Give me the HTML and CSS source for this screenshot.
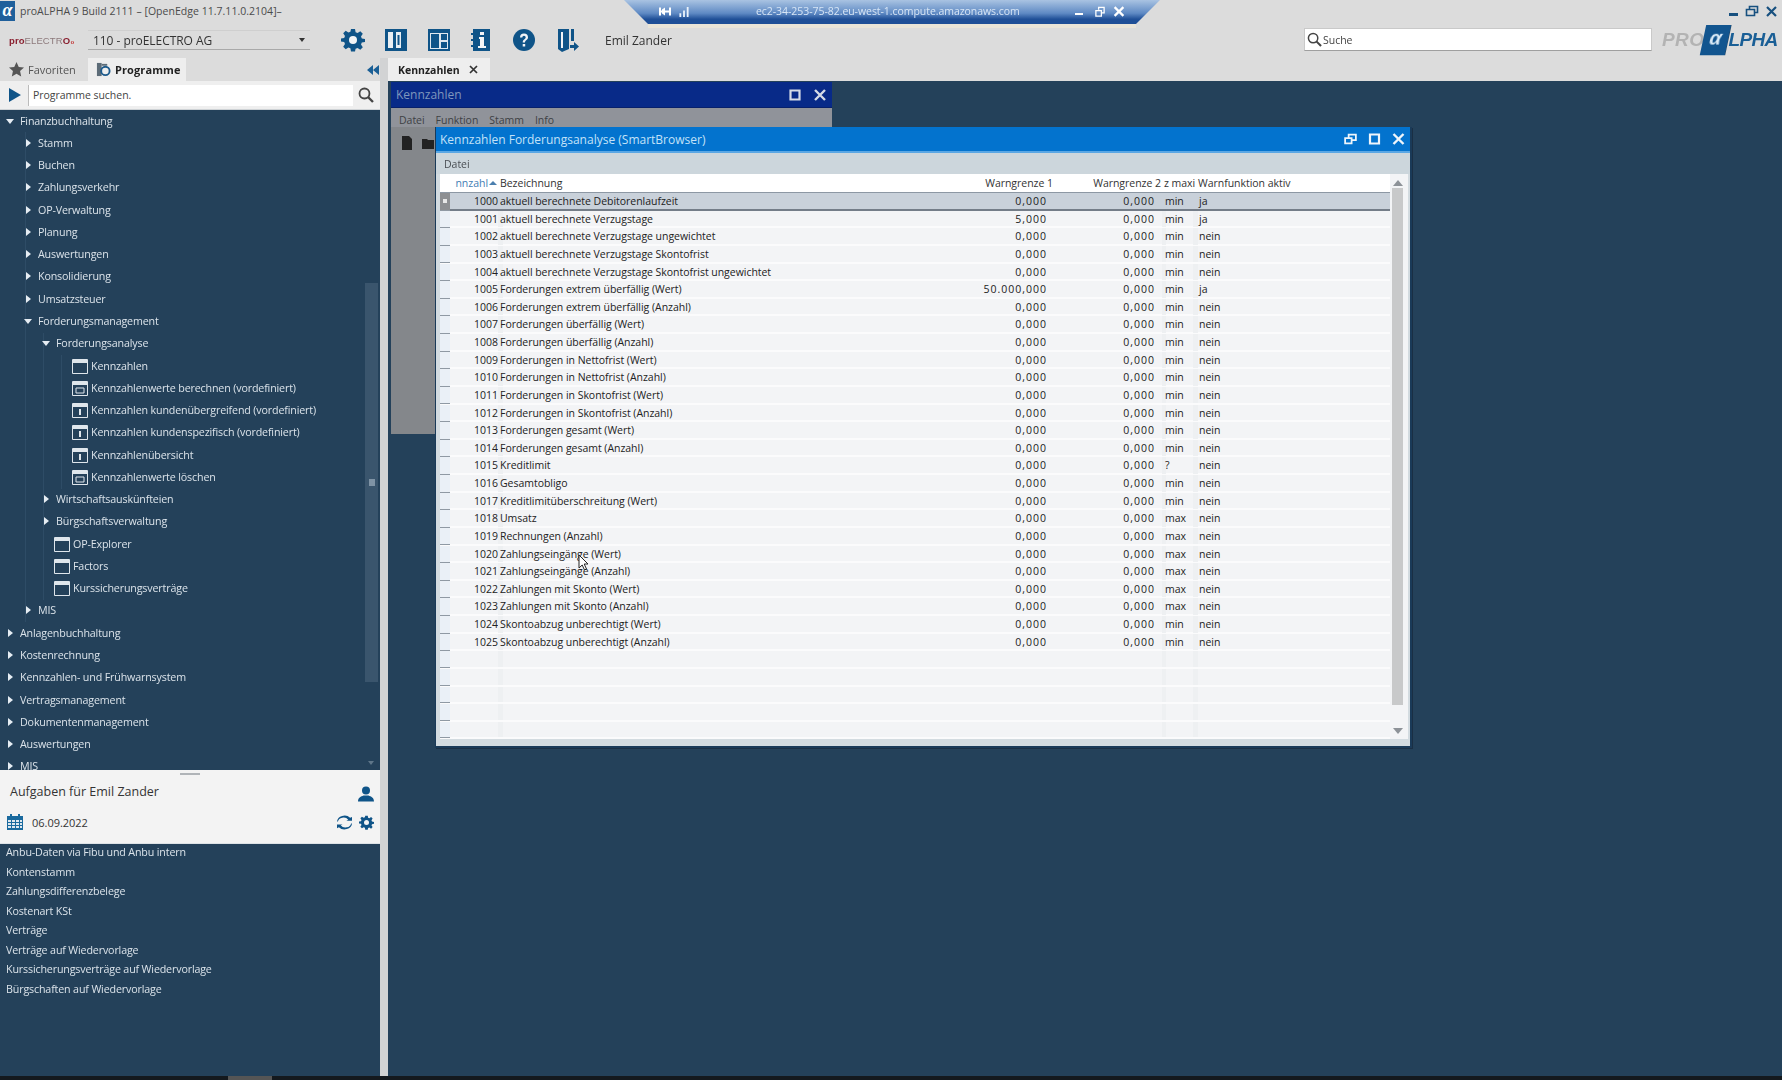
FILE: index.html
```html
<!DOCTYPE html>
<html lang="de">
<head>
<meta charset="utf-8">
<title>proALPHA</title>
<link rel="stylesheet" href="styles.css">
</head>
<body>
<svg class="defs" width="0" height="0">
  <symbol id="gear" viewBox="0 0 24 24">
    <path d="M10 1h4l.6 3.2 2 .8L19.300 3.200l2.500 2.500L20 8.400l.8 2L24 11v3l-3.200.6-.8 2 1.800 2.700-2.500 2.500-2.700-1.800-2 .8L14 23.500h-4l-.6-3.200-2-.8-2.700 1.800-2.500-2.500L4 16.100l-.8-2L0 13.500V10.500l3.200-.6.800-2L2.200 5.200l2.500-2.500 2.700 1.800 2-.8z" fill-rule="evenodd"/>
    <circle cx="12" cy="12" r="4" fill="#f2f4f6"/>
  </symbol>
  <symbol id="win" viewBox="0 0 16 16">
    <path d="M.5 1.500h15v14H.5z" fill="none" stroke="#dfe6ec"/>
    <path d="M1 2h14v3H1z" fill="#dfe6ec"/>
  </symbol>
  <symbol id="winc" viewBox="0 0 16 16">
    <path d="M.5 1.500h15v14H.5z" fill="none" stroke="#dfe6ec"/>
    <path d="M1 2h14v3H1z" fill="#dfe6ec"/>
    <path d="M4 8h8v5H4z" fill="none" stroke="#dfe6ec"/>
  </symbol>
  <symbol id="wini" viewBox="0 0 16 16">
    <path d="M.5 1.500h15v14H.5z" fill="none" stroke="#dfe6ec"/>
    <path d="M1 2h14v3H1z" fill="#dfe6ec"/>
    <path d="M7 7h2v6H7z" fill="#dfe6ec"/>
  </symbol>
</svg>

<div class="app">
  <header class="top">
    <div class="titlebar">
      <div class="alogo">α</div>
      <span class="apptitle">proALPHA 9 Build 2111 – [OpenEdge 11.7.11.0.2104]–</span>
      <div class="winbtns">
        <span class="wb-min"></span>
        <svg width="14" height="12" viewBox="0 0 14 12"><path d="M1.500 4.500h8v6h-8zM4.500 4V1.500h8v6H10" fill="none" stroke="#17507f" stroke-width="1.600"/></svg>
        <svg width="11" height="11" viewBox="0 0 11 11"><path d="M1 1l9 9M10 1l-9 9" stroke="#17507f" stroke-width="2.200"/></svg>
      </div>
    </div>
    <div class="toolbar">
      <div class="pelogo"><span class="pe-a">pro</span><span class="pe-b">ELECTR</span><span class="pe-a">O</span><span class="pe-c">₀</span></div>
      <div class="combo"><span>110 - proELECTRO AG</span><i class="combo-arrow"></i></div>
      <div class="tools">
        <svg class="tool" viewBox="0 0 24 24"><use href="#gear"/></svg>
        <svg class="tool" viewBox="0 0 24 24"><path d="M1 1h22v22H1z" fill="#0f5488"/><path d="M4 4h5v16H4zM12 4h5v16h-5z" fill="#e8eef3"/><path d="M13.500 7h2v10h-2z" fill="#0f5488"/></svg>
        <svg class="tool" viewBox="0 0 24 24"><path d="M1 1h22v22H1z" fill="#0f5488"/><path d="M3 5h18v16H3z" fill="#dfe7ee"/><path d="M4 6h8v14H4zM14 6h6v6h-6zM14 14h6v6h-6z" fill="#0f5488"/></svg>
        <svg class="tool" viewBox="0 0 24 24"><path d="M4 1h17v22H4z" fill="#0f5488"/><path d="M2 5h4v2H2zM2 11h4v2H2zM2 17h4v2H2z" fill="#0f5488"/><path d="M11 4h4v3h-4zM10 9h5v9h2v2H9v-2h2v-7h-1z" fill="#f2f4f6"/></svg>
        <svg class="tool" viewBox="0 0 24 24"><circle cx="12" cy="12" r="11" fill="#0f5488"/><path d="M8 9.500a4 4 0 0 1 8 0c0 2.500-3 2.700-3 5h-2.300c0-3.300 3-3.300 3-5a1.700 1.700 0 0 0-3.400 0z" fill="#f2f4f6"/><path d="M10.700 16h2.500v2.500h-2.500z" fill="#f2f4f6"/></svg>
        <svg class="tool" viewBox="0 0 24 24"><path d="M3 1h11v20l-7 3-4-3z" fill="#0f5488"/><path d="M7 4v16" stroke="#f2f4f6" stroke-width="2"/><path d="M16 1h3v12h-3zM15 17h4v-3l5 4.500-5 4.500v-3h-4z" fill="#0f5488"/></svg>
      </div>
      <span class="username">Emil Zander</span>
      <div class="globalsearch">
        <svg class="mag" viewBox="0 0 16 16"><circle cx="6.500" cy="6.500" r="5" fill="none" stroke="#444" stroke-width="1.600"/><path d="M10 10l5 5" stroke="#444" stroke-width="2.200"/></svg>
        <span>Suche</span>
      </div>
      <div class="palogo"><span class="pa-pro">PRO</span><span class="pa-a">α</span><span class="pa-lpha">LPHA</span></div>
    </div>
  </header>

  <div class="work">
    <aside class="side">
      <div class="sidetabs">
        <div class="stab">
          <svg class="stab-ic" viewBox="0 0 16 16"><path d="M8 0l2.400 5.200 5.600.6-4.200 3.800L13 15.500l-5-3-5 3 1.200-5.900L0 5.800l5.600-.6z" fill="#555"/></svg>
          <span>Favoriten</span>
        </div>
        <div class="stab stab-on">
          <svg class="stab-ic" viewBox="0 0 16 16"><path d="M1 1h5v14H1z" fill="#5d6c78"/><path d="M6 2h6v2H6z" fill="#5d6c78"/><circle cx="10" cy="9.500" r="4.500" fill="#eeeeee" stroke="#1c5a8c" stroke-width="2"/></svg>
          <span>Programme</span>
        </div>
        <svg class="collapse" viewBox="0 0 14 12"><path d="M7 1L1 6l6 5zM13 1L7 6l6 5z" fill="#1a5f96"/></svg>
      </div>
      <div class="psearch">
        <svg class="play" viewBox="0 0 12 14"><path d="M0 0l12 7-12 7z" fill="#0f5488"/></svg>
        <div class="pinput">Programme suchen.</div>
        <svg class="mag2" viewBox="0 0 16 16"><circle cx="6.500" cy="6.500" r="5" fill="none" stroke="#444" stroke-width="1.800"/><path d="M10 10l5 5" stroke="#444" stroke-width="2.400"/></svg>
      </div>
      <nav class="tree">
        <div class="sb"><i class="grip"></i></div>
        <i class="sbdown"></i>
        <div class="tr"><i class="tw tw-d"></i><span>Finanzbuchhaltung</span></div>
        <div class="grp">
          <div class="tr"><i class="tw tw-r"></i><span>Stamm</span></div>
          <div class="tr"><i class="tw tw-r"></i><span>Buchen</span></div>
          <div class="tr"><i class="tw tw-r"></i><span>Zahlungsverkehr</span></div>
          <div class="tr"><i class="tw tw-r"></i><span>OP-Verwaltung</span></div>
          <div class="tr"><i class="tw tw-r"></i><span>Planung</span></div>
          <div class="tr"><i class="tw tw-r"></i><span>Auswertungen</span></div>
          <div class="tr"><i class="tw tw-r"></i><span>Konsolidierung</span></div>
          <div class="tr"><i class="tw tw-r"></i><span>Umsatzsteuer</span></div>
          <div class="tr"><i class="tw tw-d"></i><span>Forderungsmanagement</span></div>
          <div class="grp">
            <div class="tr"><i class="tw tw-d"></i><span>Forderungsanalyse</span></div>
            <div class="grp">
              <div class="tr"><i class="lf"></i><svg class="wi"><use href="#win"/></svg><span>Kennzahlen</span></div>
              <div class="tr"><i class="lf"></i><svg class="wi"><use href="#winc"/></svg><span>Kennzahlenwerte berechnen (vordefiniert)</span></div>
              <div class="tr"><i class="lf"></i><svg class="wi"><use href="#wini"/></svg><span>Kennzahlen kundenübergreifend (vordefiniert)</span></div>
              <div class="tr"><i class="lf"></i><svg class="wi"><use href="#wini"/></svg><span>Kennzahlen kundenspezifisch (vordefiniert)</span></div>
              <div class="tr"><i class="lf"></i><svg class="wi"><use href="#wini"/></svg><span>Kennzahlenübersicht</span></div>
              <div class="tr"><i class="lf"></i><svg class="wi"><use href="#winc"/></svg><span>Kennzahlenwerte löschen</span></div>
            </div>
            <div class="tr"><i class="tw tw-r"></i><span>Wirtschaftsauskünfteien</span></div>
            <div class="tr"><i class="tw tw-r"></i><span>Bürgschaftsverwaltung</span></div>
            <div class="tr"><i class="lf"></i><svg class="wi"><use href="#win"/></svg><span>OP-Explorer</span></div>
            <div class="tr"><i class="lf"></i><svg class="wi"><use href="#win"/></svg><span>Factors</span></div>
            <div class="tr"><i class="lf"></i><svg class="wi"><use href="#win"/></svg><span>Kurssicherungsverträge</span></div>
          </div>
          <div class="tr"><i class="tw tw-r"></i><span>MIS</span></div>
        </div>
        <div class="tr"><i class="tw tw-r"></i><span>Anlagenbuchhaltung</span></div>
        <div class="tr"><i class="tw tw-r"></i><span>Kostenrechnung</span></div>
        <div class="tr"><i class="tw tw-r"></i><span>Kennzahlen- und Frühwarnsystem</span></div>
        <div class="tr"><i class="tw tw-r"></i><span>Vertragsmanagement</span></div>
        <div class="tr"><i class="tw tw-r"></i><span>Dokumentenmanagement</span></div>
        <div class="tr"><i class="tw tw-r"></i><span>Auswertungen</span></div>
        <div class="tr"><i class="tw tw-r"></i><span>MIS</span></div>
      </nav>
      <section class="tasks">
        <i class="handle"></i>
        <div class="tasks-head">
          <span>Aufgaben für Emil Zander</span>
          <svg class="t-ic" viewBox="0 0 16 16"><circle cx="8" cy="4.500" r="4" fill="#0f5488"/><path d="M0 15.500c0-4 3-5 5.500-6h5c2.500 1 5.500 2 5.500 6z" fill="#0f5488"/></svg>
        </div>
        <div class="tasks-date">
          <svg class="t-cal" viewBox="0 0 16 16"><path d="M0 2h16v14H0z" fill="#1a6a9e"/><path d="M3 0h2v3H3zM11 0h2v3h-2z" fill="#1a6a9e"/><path d="M1 6h3v2H1zM5 6h3v2H5zM9 6h3v2H9zM13 6h2v2h-2zM1 9h3v2H1zM5 9h3v2H5zM9 9h3v2H9zM13 9h2v2h-2zM1 12h3v2H1zM5 12h3v2H5zM9 12h3v2H9zM13 12h2v2h-2z" fill="#dfe8ef"/></svg>
          <span>06.09.2022</span>
          <svg class="t-ref" viewBox="0 0 16 16"><path d="M1 7a6 5 0 0 1 11-2l-2 1h6v-4l-2 1A8 7 0 0 0 0 7zM15 9a6 5 0 0 1-11 2l2-1H0v4l2-1a8 7 0 0 0 14-4z" fill="#0f5488"/></svg>
          <svg class="t-gear" viewBox="0 0 24 24"><use href="#gear"/></svg>
        </div>
      </section>
      <ul class="tasklist">
        <li>Anbu-Daten via Fibu und Anbu intern</li>
        <li>Kontenstamm</li>
        <li>Zahlungsdifferenzbelege</li>
        <li>Kostenart KSt</li>
        <li>Verträge</li>
        <li>Verträge auf Wiedervorlage</li>
        <li>Kurssicherungsverträge auf Wiedervorlage</li>
        <li>Bürgschaften auf Wiedervorlage</li>
      </ul>
    </aside>

    <main class="main">
      <div class="doctabs">
        <div class="dtab"><span>Kennzahlen</span><svg class="dx" viewBox="0 0 9 9"><path d="M1 1l7 7M8 1L1 8" stroke="#333" stroke-width="1.700"/></svg></div>
      </div>
      <div class="desk">
        <div class="bwin">
          <div class="bwin-title">
            <span>Kennzahlen</span>
            <svg class="wctl" viewBox="0 0 12 12"><path d="M1.500 1.500h9v9h-9z" fill="none" stroke="#d5dbe6" stroke-width="2.200"/></svg>
            <svg class="wctl" viewBox="0 0 12 12"><path d="M1 1l10 10M11 1L1 11" stroke="#d5dbe6" stroke-width="2.400"/></svg>
          </div>
          <div class="bwin-menu"><span>Datei</span><span>Funktion</span><span>Stamm</span><span>Info</span></div>
          <div class="bwin-tools">
            <svg class="bt" viewBox="0 0 14 14"><path d="M2 0h7l3 3v11H2z" fill="#222"/></svg>
            <svg class="bt" viewBox="0 0 14 14"><path d="M0 3h5l1 1h6v9H0z" fill="#222"/></svg>
          </div>
        </div>

        <div class="fwin">
          <div class="fwin-title">
            <span>Kennzahlen Forderungsanalyse (SmartBrowser)</span>
            <svg class="wctl" viewBox="0 0 14 12"><path d="M1.200 5h7v5.800h-7zM5 4.500V1.200h7.800v6H9" fill="none" stroke="#eef5fb" stroke-width="1.900"/></svg>
            <svg class="wctl" viewBox="0 0 12 12"><path d="M1.500 1.500h9v9h-9z" fill="none" stroke="#eef5fb" stroke-width="2.200"/></svg>
            <svg class="wctl" viewBox="0 0 12 12"><path d="M1 1l10 10M11 1L1 11" stroke="#eef5fb" stroke-width="2.400"/></svg>
          </div>
          <div class="fwin-menu">Datei</div>
          <div class="gridwrap">
            <div class="grid">
              <div class="ghead">
                <span class="gh-sel"></span>
                <span class="gh-num"><span class="gh-clip">nnzahl</span><i class="sortup"></i></span>
                <span class="gh-name">Bezeichnung</span>
                <span class="gh-w1">Warngrenze 1</span>
                <span class="gh-w2">Warngrenze 2</span>
                <span class="gh-z">z maxi</span>
                <span class="gh-f">Warnfunktion aktiv</span>
              </div>
              <div class="row row-on"><i class="sel"></i><span class="n">1000</span><span class="t">aktuell berechnete Debitorenlaufzeit</span><span class="w">0,000</span><span class="w">0,000</span><span class="u">min</span><span class="f">ja</span></div>
              <div class="row"><i class="sel"></i><span class="n">1001</span><span class="t">aktuell berechnete Verzugstage</span><span class="w">5,000</span><span class="w">0,000</span><span class="u">min</span><span class="f">ja</span></div>
              <div class="row"><i class="sel"></i><span class="n">1002</span><span class="t">aktuell berechnete Verzugstage ungewichtet</span><span class="w">0,000</span><span class="w">0,000</span><span class="u">min</span><span class="f">nein</span></div>
              <div class="row"><i class="sel"></i><span class="n">1003</span><span class="t">aktuell berechnete Verzugstage Skontofrist</span><span class="w">0,000</span><span class="w">0,000</span><span class="u">min</span><span class="f">nein</span></div>
              <div class="row"><i class="sel"></i><span class="n">1004</span><span class="t">aktuell berechnete Verzugstage Skontofrist ungewichtet</span><span class="w">0,000</span><span class="w">0,000</span><span class="u">min</span><span class="f">nein</span></div>
              <div class="row"><i class="sel"></i><span class="n">1005</span><span class="t">Forderungen extrem überfällig (Wert)</span><span class="w">50.000,000</span><span class="w">0,000</span><span class="u">min</span><span class="f">ja</span></div>
              <div class="row"><i class="sel"></i><span class="n">1006</span><span class="t">Forderungen extrem überfällig (Anzahl)</span><span class="w">0,000</span><span class="w">0,000</span><span class="u">min</span><span class="f">nein</span></div>
              <div class="row"><i class="sel"></i><span class="n">1007</span><span class="t">Forderungen überfällig (Wert)</span><span class="w">0,000</span><span class="w">0,000</span><span class="u">min</span><span class="f">nein</span></div>
              <div class="row"><i class="sel"></i><span class="n">1008</span><span class="t">Forderungen überfällig (Anzahl)</span><span class="w">0,000</span><span class="w">0,000</span><span class="u">min</span><span class="f">nein</span></div>
              <div class="row"><i class="sel"></i><span class="n">1009</span><span class="t">Forderungen in Nettofrist (Wert)</span><span class="w">0,000</span><span class="w">0,000</span><span class="u">min</span><span class="f">nein</span></div>
              <div class="row"><i class="sel"></i><span class="n">1010</span><span class="t">Forderungen in Nettofrist (Anzahl)</span><span class="w">0,000</span><span class="w">0,000</span><span class="u">min</span><span class="f">nein</span></div>
              <div class="row"><i class="sel"></i><span class="n">1011</span><span class="t">Forderungen in Skontofrist (Wert)</span><span class="w">0,000</span><span class="w">0,000</span><span class="u">min</span><span class="f">nein</span></div>
              <div class="row"><i class="sel"></i><span class="n">1012</span><span class="t">Forderungen in Skontofrist (Anzahl)</span><span class="w">0,000</span><span class="w">0,000</span><span class="u">min</span><span class="f">nein</span></div>
              <div class="row"><i class="sel"></i><span class="n">1013</span><span class="t">Forderungen gesamt (Wert)</span><span class="w">0,000</span><span class="w">0,000</span><span class="u">min</span><span class="f">nein</span></div>
              <div class="row"><i class="sel"></i><span class="n">1014</span><span class="t">Forderungen gesamt (Anzahl)</span><span class="w">0,000</span><span class="w">0,000</span><span class="u">min</span><span class="f">nein</span></div>
              <div class="row"><i class="sel"></i><span class="n">1015</span><span class="t">Kreditlimit</span><span class="w">0,000</span><span class="w">0,000</span><span class="u">?</span><span class="f">nein</span></div>
              <div class="row"><i class="sel"></i><span class="n">1016</span><span class="t">Gesamtobligo</span><span class="w">0,000</span><span class="w">0,000</span><span class="u">min</span><span class="f">nein</span></div>
              <div class="row"><i class="sel"></i><span class="n">1017</span><span class="t">Kreditlimitüberschreitung (Wert)</span><span class="w">0,000</span><span class="w">0,000</span><span class="u">min</span><span class="f">nein</span></div>
              <div class="row"><i class="sel"></i><span class="n">1018</span><span class="t">Umsatz</span><span class="w">0,000</span><span class="w">0,000</span><span class="u">max</span><span class="f">nein</span></div>
              <div class="row"><i class="sel"></i><span class="n">1019</span><span class="t">Rechnungen (Anzahl)</span><span class="w">0,000</span><span class="w">0,000</span><span class="u">max</span><span class="f">nein</span></div>
              <div class="row"><i class="sel"></i><span class="n">1020</span><span class="t">Zahlungseingänge (Wert)</span><span class="w">0,000</span><span class="w">0,000</span><span class="u">max</span><span class="f">nein</span></div>
              <div class="row"><i class="sel"></i><span class="n">1021</span><span class="t">Zahlungseingänge (Anzahl)</span><span class="w">0,000</span><span class="w">0,000</span><span class="u">max</span><span class="f">nein</span></div>
              <div class="row"><i class="sel"></i><span class="n">1022</span><span class="t">Zahlungen mit Skonto (Wert)</span><span class="w">0,000</span><span class="w">0,000</span><span class="u">max</span><span class="f">nein</span></div>
              <div class="row"><i class="sel"></i><span class="n">1023</span><span class="t">Zahlungen mit Skonto (Anzahl)</span><span class="w">0,000</span><span class="w">0,000</span><span class="u">max</span><span class="f">nein</span></div>
              <div class="row"><i class="sel"></i><span class="n">1024</span><span class="t">Skontoabzug unberechtigt (Wert)</span><span class="w">0,000</span><span class="w">0,000</span><span class="u">min</span><span class="f">nein</span></div>
              <div class="row"><i class="sel"></i><span class="n">1025</span><span class="t">Skontoabzug unberechtigt (Anzahl)</span><span class="w">0,000</span><span class="w">0,000</span><span class="u">min</span><span class="f">nein</span></div>
              <div class="row"><i class="sel"></i><span class="n"></span><span class="t"></span><span class="w"></span><span class="w"></span><span class="u"></span><span class="f"></span></div>
              <div class="row"><i class="sel"></i><span class="n"></span><span class="t"></span><span class="w"></span><span class="w"></span><span class="u"></span><span class="f"></span></div>
              <div class="row"><i class="sel"></i><span class="n"></span><span class="t"></span><span class="w"></span><span class="w"></span><span class="u"></span><span class="f"></span></div>
              <div class="row"><i class="sel"></i><span class="n"></span><span class="t"></span><span class="w"></span><span class="w"></span><span class="u"></span><span class="f"></span></div>
              <div class="row"><i class="sel"></i><span class="n"></span><span class="t"></span><span class="w"></span><span class="w"></span><span class="u"></span><span class="f"></span></div>
            </div>
            <div class="vscroll">
              <svg class="sarrow" viewBox="0 0 10 6"><path d="M5 0l5 6H0z" fill="#8d9298"/></svg>
              <div class="vthumb"></div>
              <svg class="sarrow sarrow-end" viewBox="0 0 10 6"><path d="M5 6L0 0h10z" fill="#8d9298"/></svg>
            </div>
          </div>
        </div>

        <svg class="cursor" viewBox="0 0 12 18"><path d="M1 1v13l3.200-3 2.300 5 2-1-2.300-5H10z" fill="#fff" stroke="#222"/></svg>
      </div>
    </main>
  </div>
  <div class="footstrip"><i class="footthumb"></i></div>

  <div class="conn">
    <svg class="conn-shape" viewBox="0 0 536 30" preserveAspectRatio="none"><defs><linearGradient id="cg" x1="0" y1="0" x2="0" y2="1"><stop offset="0" stop-color="#a9c3e2"/><stop offset=".55" stop-color="#5f8ac4"/><stop offset=".8" stop-color="#1f4f97"/><stop offset="1" stop-color="#1f4f97"/></linearGradient></defs><path d="M0 0h536l-24 24H24z" fill="url(#cg)"/><path d="M24 24h488v4H24z" fill="#e9e4d8"/></svg>
    <div class="conn-row">
      <svg class="c-ic" viewBox="0 0 12 10"><path d="M0 1h2v8H0zM10 1h2v8h-2zM2 4h8v2H2zM3 3l3-2v8L3 7z" fill="#fff"/></svg>
      <svg class="c-ic" viewBox="0 0 12 12"><path d="M1 8h2v4H1zM5 5h2v7H5zM9 1h2v11H9z" fill="#eaf2fb"/></svg>
      <span class="c-host">ec2-34-253-75-82.eu-west-1.compute.amazonaws.com</span>
      <span class="c-min"></span>
      <svg class="c-ic" viewBox="0 0 12 12"><path d="M1.500 5h6v6h-6zM4.500 4V1.500h6v6H8" fill="none" stroke="#fff" stroke-width="1.400"/></svg>
      <svg class="c-ic" viewBox="0 0 10 10"><path d="M1 1l8 8M9 1L1 9" stroke="#fff" stroke-width="2"/></svg>
    </div>
  </div>
</div>
</body>
</html>
```

FILE: styles.css
```css
* { box-sizing: border-box; }
html, body { margin: 0; height: 100%; overflow: hidden; }
body { font-family: "Open Sans", "Noto Sans", sans-serif; font-size: 10.500px; color: #222; background: #24415a; letter-spacing: -.03px; }
.defs { position: absolute; }

.app { position: relative; display: flex; flex-direction: column; height: 1080px; width: 1782px; filter: blur(.3px); }

.top { background: #dcdcdc; height: 58px; flex: none; }
.titlebar { height: 22px; display: flex; align-items: center; }
.alogo { width: 15px; height: 20px; background: #1f5f9b; color: #fff; font: italic 700 18px/18px "Liberation Serif", serif; text-align: center; }
.apptitle { margin-left: 5px; color: #4b4b4b; font-size: 10.500px; letter-spacing: .03px; }
.winbtns { margin-left: auto; display: flex; align-items: center; gap: 7px; padding-right: 5px; }
.wb-min { width: 9px; height: 3px; background: #17507f; margin-top: 7px; }

.toolbar { height: 36px; display: flex; align-items: center; position: relative; }
.pelogo { width: 88px; padding-left: 9px; font: 700 9.500px "Liberation Sans", sans-serif; letter-spacing: .1px; }
.pe-a { color: #8a2030; }
.pe-b { color: #8d7a7c; font-weight: 400; }
.pe-c { color: #c23a3a; }
.combo { width: 222px; height: 20px; background: #dcdcdc; border-bottom: 1px solid #a9a9a9; border-top: 1px solid #cfcfcf; display: flex; align-items: center; padding: 0 5px; font-size: 12px; color: #333; letter-spacing: -.05px; }
.combo-arrow { margin-left: auto; border: 3.500px solid transparent; border-top: 4px solid #333; border-bottom: 0; }
.tools { display: flex; margin-left: 31px; gap: 18.800px; }
.tool { width: 24px; height: 24px; fill: #0f5488; }
.username { margin-left: 26px; font-size: 12px; color: #333; letter-spacing: 0; }
.globalsearch { position: absolute; left: 1304px; top: 6px; width: 348px; height: 23px; background: #fff; border: 1px solid #c9c9c9; border-bottom-color: #9f9f9f; display: flex; align-items: center; gap: 1px; padding-left: 2px; color: #444; }
.mag { width: 15px; height: 15px; }
.palogo { position: absolute; left: 1662px; top: 3px; width: 118px; height: 30px; display: flex; align-items: center; font: italic 700 19px "Liberation Sans", sans-serif; }
.pa-pro { color: #b3b3b3; letter-spacing: .4px; flex: none; }
.pa-a { background: #12558f; color: #dcecf8; width: 25px; height: 30px; flex: none; text-align: center; line-height: 27px; transform: skewX(-12deg); margin-left: -1px; }
.pa-lpha { color: #1a5f96; letter-spacing: -.6px; flex: none; }

.work { flex: 1; display: flex; min-height: 0; }

.side { width: 388px; flex: none; display: flex; flex-direction: column; background: #d2d3d4; border-right: 8px solid #d2d3d4; }
.sidetabs { height: 23px; display: flex; align-items: flex-end; background: #dcdcdc; position: relative; flex: none; padding-left: 9px; }
.stab { height: 23px; display: flex; align-items: center; gap: 4px; color: #555; width: 70px; font-size: 11px; flex: none; }
.stab-on { background: #eeeeee; width: 98px; padding-left: 8px; margin-left: 9px; color: #222; font-weight: 700; letter-spacing: .1px; }
.stab-ic { width: 15px; height: 15px; flex: none; }
.collapse { position: absolute; right: 0; top: 6px; width: 14px; height: 12px; }
.psearch { height: 29px; flex: none; background: #efefef; display: flex; align-items: center; padding: 0 6px 0 9px; border-bottom: 1px solid #cfd3d6; }
.play { width: 12px; height: 14px; }
.pinput { width: 326px; height: 21px; margin-left: 7px; background: #fff; border-left: 1px solid #bbb; padding-left: 4px; line-height: 20px; color: #444; }
.mag2 { width: 16px; height: 16px; margin-left: 5px; }

.tree { height: 660px; flex: none; background: #24415a; color: #dbe3ea; overflow: hidden; position: relative; font-size: 10.700px; letter-spacing: -.15px; }
.sb { position: absolute; left: 365px; top: 173px; width: 13px; height: 399px; background: #3a556d; display: flex; align-items: center; justify-content: center; }
.grip { width: 6px; height: 7px; background: #7f93a5; }
.sbdown { position: absolute; left: 368px; top: 651px; border: 3.500px solid transparent; border-top: 4px solid #5f7689; border-bottom: 0; }
.tr { height: 22.280px; display: flex; align-items: center; padding: 0 0 1px 6px; white-space: nowrap; }
.grp { margin-left: 18px; background: linear-gradient(#2e4c66, #2e4c66) 7px 0 / 1px 100% no-repeat; }
.tw { width: 14px; height: 10px; flex: none; position: relative; }
.tw::before { content: ""; position: absolute; }
.tw-r::before { left: 2px; top: 1px; border: 4px solid transparent; border-left: 5px solid #e6edf3; border-right: 0; }
.tw-d::before { left: 0; top: 3px; border: 4.500px solid transparent; border-top: 5px solid #e6edf3; border-bottom: 0; }
.lf { width: 12px; flex: none; }
.wi { width: 16px; height: 16px; flex: none; margin-right: 3px; }

.tasks { height: 74px; flex: none; background: #f3f3f3; position: relative; padding: 8px 6px 0 10px; border-bottom: 1px solid #dde2e6; }
.handle { position: absolute; left: 180px; top: 3px; width: 20px; height: 2px; background: #b0b4b8; }
.tasks-head { height: 26px; display: flex; align-items: center; justify-content: space-between; font-size: 12.500px; color: #333; letter-spacing: 0; }
.t-ic { width: 16px; height: 16px; margin-top: 6px; }
.tasks-date { height: 32px; margin-left: -3px; display: flex; align-items: center; font-size: 11px; color: #333; margin-top: 2px; }
.t-cal { width: 16px; height: 16px; margin-right: 9px; flex: none; }
.t-ref { width: 15px; height: 15px; margin-left: auto; margin-right: 7px; }
.t-gear { width: 15px; height: 15px; fill: #0f5488; }
.tasklist { flex: 1; margin: 0; padding: 0 0 0 6px; list-style: none; background: #24415a; color: #dbe3ea; font-size: 10.700px; letter-spacing: -.15px; }
.tasklist li { height: 19.500px; line-height: 16px; white-space: nowrap; }

.main { flex: 1; display: flex; flex-direction: column; min-width: 0; }
.doctabs { height: 23px; flex: none; background: #dcdcdc; }
.dtab { width: 102px; height: 23px; background: #eeeeee; display: flex; align-items: center; padding-left: 10px; font-weight: 700; font-size: 10.500px; color: #222; letter-spacing: 0; }
.dx { width: 9px; height: 9px; margin-left: 9px; }
.desk { flex: 1; position: relative; background: #24415a; }

.bwin { position: absolute; left: 3px; top: 1px; width: 441px; height: 352px; background: #84878b; }
.bwin-title { height: 26px; background: #082a88; color: #7f97bd; display: flex; align-items: center; padding: 0 6px 0 5px; gap: 11px; font-size: 12px; letter-spacing: 0; border-bottom: 1px solid #07206b; }
.bwin-title span { margin-right: auto; }
.bwin-title .wctl:first-of-type { margin-right: 2px; }
.bwin-menu { height: 19px; display: flex; gap: 11px; padding: 5px 0 0 8px; color: #3e4145; background: #90939a; }
.bwin-tools { display: flex; gap: 8px; padding: 9px 0 0 9px; }
.bt { width: 14px; height: 14px; }
.wctl { width: 12px; height: 12px; flex: none; }

.fwin { position: absolute; left: 47px; top: 46px; width: 977px; height: 621px; background: #d3dbe0; border: 1px solid #1a3a58; border-width: 0 2px 2px 1px; box-shadow: 1px 1px 0 #1a2f44; }
.fwin-title { height: 26px; background: #0373ce; color: #c3e2f8; display: flex; align-items: center; padding: 0 5px 0 4px; gap: 11px; font-size: 12px; letter-spacing: 0; border-bottom: 2px solid #5aa7e4; }
.fwin-title span { margin-right: auto; }
.fwin-title .wctl { width: 13px; height: 12px; }
.fwin-menu { height: 21px; line-height: 23px; padding-left: 8px; color: #4a4f54; background: #ccd6dc; }
.gridwrap { display: flex; margin: 0 2px 0 4px; }
.grid { width: 950px; flex: none; background: #f3f4f6; overflow: hidden; }
.ghead, .row { display: grid; }
.ghead { grid-template-columns: 12px 46px 452px 103px 108px 36px 193px; height: 19px; line-height: 18px; background: #fff; color: #333; border-bottom: 1px solid #8d98a4; white-space: nowrap; }
.gh-num { display: flex; justify-content: flex-end; align-items: center; color: #3f7db4; }
.gh-clip { flex: none; }
.sortup { flex: none; margin: 0 1px 0 1px; border: 4px solid transparent; border-bottom: 4px solid #4a7fae; border-top: 0; }
.gh-name { padding-left: 2px; }
.gh-w1, .gh-w2 { text-align: right; }
.gh-z { padding-left: 3px; }
.gh-f { padding-left: 1px; }
.row { grid-template-columns: 12px 46px 452px 97px 108px 43px 192px; height: 17.640px; line-height: 16.500px; background: #f3f4f6; border-bottom: 2px solid #fbfbfc; white-space: nowrap; }
.row-on { background: #c9d1da; border-bottom: 2px solid #747d88; }
.sel { background: #eaf0f7; border-bottom: 1px solid #8f99a4; margin: 0 2px -1px 0; position: relative; }
.row-on .sel { background: #8d8f92; }
.row-on .sel::before { content: ""; position: absolute; left: 3px; top: 6px; width: 4px; height: 4px; background: #e8e8e8; }
.n { text-align: right; }
.t { padding-left: 2px; background: linear-gradient(#eef0f2, #eef0f2) 0 0 / 5px 100% no-repeat; }
.row-on .t, .row-on .u { background: none; }
.w { text-align: right; letter-spacing: 1px; }
.u { padding-left: 10px; letter-spacing: 0; background: linear-gradient(#eef0f2, #eef0f2) 7px 0 / 4px 100% no-repeat, linear-gradient(#eef0f2, #eef0f2) right 0 / 5px 100% no-repeat; }
.f { padding-left: 1px; letter-spacing: 0; }
.vscroll { flex: 1; height: 565px; background: #f3f4f6; display: flex; flex-direction: column; padding: 6px 0 5px 2px; }
.sarrow { width: 10px; height: 6px; flex: none; margin-left: 1px; }
.sarrow-end { margin-top: auto; }
.vthumb { width: 11px; height: 517px; margin-top: 2px; background: #c8c9ca; }
.cursor { position: absolute; left: 190px; top: 473px; width: 12px; height: 18px; }

.footstrip { height: 4px; flex: none; background: #14191e; position: relative; }
.footthumb { position: absolute; left: 228px; top: 0; width: 44px; height: 4px; background: #555; }

.conn { position: absolute; left: 624px; top: 0; width: 536px; height: 30px; }
.conn-shape { position: absolute; inset: 0; width: 100%; height: 100%; }
.conn-row { position: relative; height: 22px; padding: 0 35px; display: flex; align-items: center; gap: 7px; color: #d8e6f6; font-size: 10.500px; letter-spacing: -.05px; }
.c-ic { width: 12px; height: 11px; flex: none; }
.c-host { margin-left: 59px; width: 295px; }
.c-min { width: 8px; height: 2px; background: #fff; margin-top: 6px; margin-left: 18px; margin-right: 4px; }
```
